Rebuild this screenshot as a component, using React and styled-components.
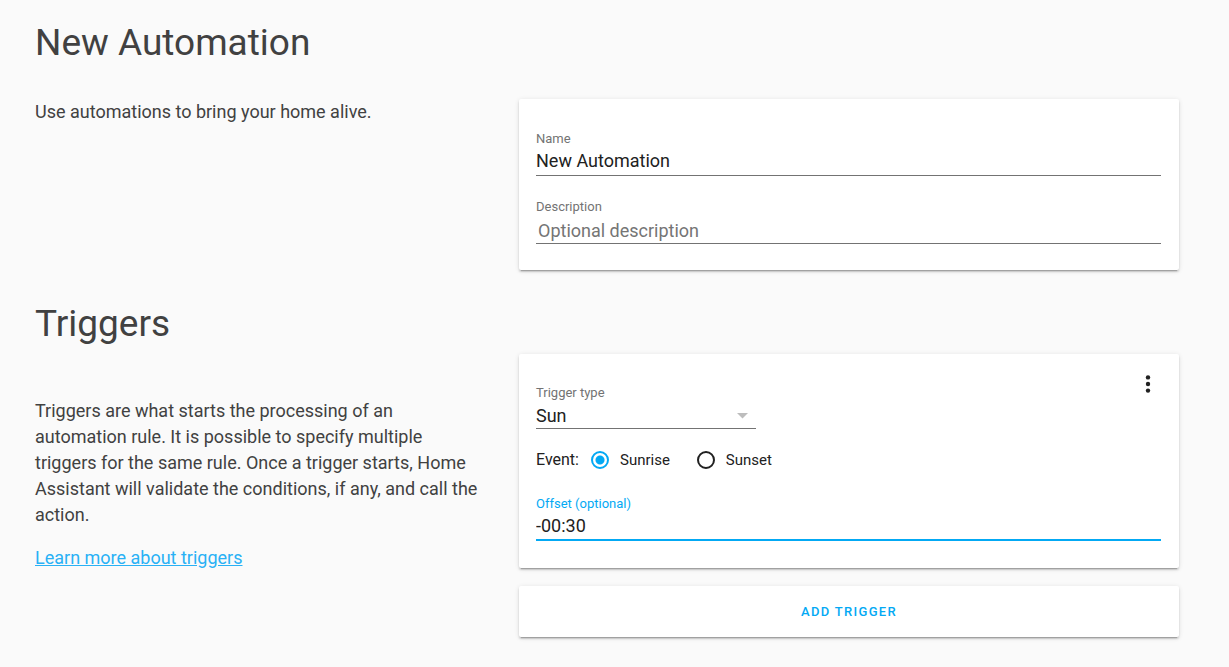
import React, { useState } from "react";
import styled, { createGlobalStyle } from "styled-components";

const GlobalStyle = createGlobalStyle`
  *, *::before, *::after { box-sizing: border-box; }
  body {
    margin: 0;
    background: #fafafa;
    color: #212121;
    font-family: Roboto, "Liberation Sans", sans-serif;
    font-size: 18px;
    line-height: 26px;
  }
  input, select, button { font: inherit; color: inherit; }
`;

const Page = styled.main`
  padding: 19px 50px 30px 35px;
`;

const Section = styled.section`
  & + & { margin-top: 30px; }
`;

const Heading = styled.h1`
  margin: 0;
  font-size: 37px;
  line-height: 48px;
  font-weight: 400;
  color: #414141;
`;

const Columns = styled.div`
  display: grid;
  grid-template-columns: 223fr 330fr;
  column-gap: 38px;
  margin-top: ${(p) => (p.$tight ? 6 : 32)}px;
`;

const Intro = styled.div`
  padding-top: ${(p) => (p.$lowered ? 44 : 0)}px;
  color: #414141;
`;

const Paragraph = styled.p`
  margin: 0 0 17px;
`;

const Link = styled.a`
  color: #29b1f5;
`;

const Stack = styled.div`
  display: flex;
  flex-direction: column;
  gap: 18px;
`;

const Card = styled.div`
  padding: ${(p) => (p.$menu ? "8px 18px 27px 17px" : "30px 18px 26px 17px")};
  border-radius: 2px;
  background: #fff;
  box-shadow: 0 2px 2px 0 rgba(0, 0, 0, 0.14), 0 1px 5px 0 rgba(0, 0, 0, 0.12),
    0 3px 1px -2px rgba(0, 0, 0, 0.2);
`;

const Field = styled.div`
  display: flex;
  flex-direction: column;
  & + & { margin-top: 21px; }
`;

const Label = styled.label`
  font-size: 13px;
  line-height: 20px;
  color: ${(p) => (p.$active ? "#03a9f4" : "#737373")};
`;

const TextInput = styled.input`
  width: 100%;
  height: 27px;
  padding: ${(p) => (p.$native ? "1px 2px 0" : "0 0 3px")};
  border: 0;
  border-bottom: ${(p) => (p.$active ? "2px solid #03a9f4" : "1px solid #737373")};
  border-radius: 0;
  background: none;
  outline: none;
  &::placeholder { color: #757575; opacity: 1; }
`;

const CardHeader = styled.div`
  display: flex;
  justify-content: space-between;
  align-items: flex-start;
  margin-right: -9px;
`;

const SelectField = styled(Field)`
  width: 220px;
  padding-top: 21px;
`;

const SelectBox = styled.div`
  display: grid;
  align-items: center;
  border-bottom: 1px solid #737373;
  & > * { grid-area: 1 / 1; }
`;

const Select = styled.select`
  width: 100%;
  height: 25px;
  padding: 0 0 3px;
  border: 0;
  background: none;
  appearance: none;
  outline: none;
`;

const Arrow = styled.svg`
  justify-self: end;
  margin-right: 8px;
  pointer-events: none;
`;

const MenuButton = styled.button`
  display: grid;
  place-items: center;
  width: 44px;
  height: 44px;
  padding: 0;
  border: 0;
  background: none;
  cursor: pointer;
`;

const EventRow = styled.fieldset`
  display: flex;
  align-items: center;
  margin: 18px 0 21px;
  padding: 0;
  border: 0;
  font-size: 15px;
`;

const EventTitle = styled.span`
  margin-right: 12px;
  font-size: 16px;
`;

const RadioLabel = styled.label`
  display: flex;
  align-items: center;
  gap: 11px;
  margin-right: 27px;
`;

const Radio = styled.input`
  appearance: none;
  width: 18px;
  height: 18px;
  margin: 0;
  border: 2px solid #212121;
  border-radius: 50%;
  &:checked {
    border-color: #03a9f4;
    background: radial-gradient(circle, #03a9f4 4px, transparent 5px);
  }
`;

const AddButton = styled.button`
  width: 100%;
  height: 51px;
  padding: 0;
  border: 0;
  border-radius: 2px;
  background: #fff;
  box-shadow: 0 2px 2px 0 rgba(0, 0, 0, 0.14), 0 1px 5px 0 rgba(0, 0, 0, 0.12),
    0 3px 1px -2px rgba(0, 0, 0, 0.2);
  color: #03a9f4;
  font-size: 13px;
  font-weight: 500;
  letter-spacing: 0.1em;
  text-transform: uppercase;
  cursor: pointer;
`;

export default function App() {
  const [name, setName] = useState("New Automation");
  const [description, setDescription] = useState("");
  const [event, setEvent] = useState("sunrise");
  const [offset, setOffset] = useState("-00:30");

  return (
    <>
      <GlobalStyle />
      <Page>
        <Section>
          <Heading>New Automation</Heading>
          <Columns>
            <Intro>
              <Paragraph>Use automations to bring your home alive.</Paragraph>
            </Intro>
            <Card>
              <Field>
                <Label htmlFor="name">Name</Label>
                <TextInput id="name" value={name} onChange={(e) => setName(e.target.value)} />
              </Field>
              <Field>
                <Label htmlFor="description">Description</Label>
                <TextInput
                  id="description"
                  $native
                  placeholder="Optional description"
                  value={description}
                  onChange={(e) => setDescription(e.target.value)}
                />
              </Field>
            </Card>
          </Columns>
        </Section>

        <Section>
          <Heading as="h2">Triggers</Heading>
          <Columns $tight>
            <Intro $lowered>
              <Paragraph>
                Triggers are what starts the processing of an automation rule. It is possible to
                specify multiple triggers for the same rule. Once a trigger starts, Home Assistant
                will validate the conditions, if any, and call the action.
              </Paragraph>
              <Link href="#triggers">Learn more about triggers</Link>
            </Intro>
            <Stack>
              <Card $menu>
                <CardHeader>
                  <SelectField>
                    <Label htmlFor="type">Trigger type</Label>
                    <SelectBox>
                      <Select id="type" defaultValue="Sun">
                        <option>Sun</option>
                        <option>State</option>
                        <option>Time</option>
                      </Select>
                      <Arrow width="11" height="6" viewBox="0 0 11 6" aria-hidden="true">
                        <path d="M0 0h11L5.500 5.500z" fill="#bdbdbd" />
                      </Arrow>
                    </SelectBox>
                  </SelectField>
                  <MenuButton type="button" aria-label="Trigger options">
                    <svg width="26" height="26" viewBox="0 0 26 26" fill="#212121">
                      <circle cx="13" cy="6.400" r="2.200" />
                      <circle cx="13" cy="13" r="2.200" />
                      <circle cx="13" cy="19.600" r="2.200" />
                    </svg>
                  </MenuButton>
                </CardHeader>
                <EventRow aria-label="Event">
                  <EventTitle>Event:</EventTitle>
                  <RadioLabel>
                    <Radio
                      type="radio"
                      name="event"
                      checked={event === "sunrise"}
                      onChange={() => setEvent("sunrise")}
                    />
                    Sunrise
                  </RadioLabel>
                  <RadioLabel>
                    <Radio
                      type="radio"
                      name="event"
                      checked={event === "sunset"}
                      onChange={() => setEvent("sunset")}
                    />
                    Sunset
                  </RadioLabel>
                </EventRow>
                <Field>
                  <Label htmlFor="offset" $active>Offset (optional)</Label>
                  <TextInput
                    id="offset"
                    $active
                    value={offset}
                    onChange={(e) => setOffset(e.target.value)}
                  />
                </Field>
              </Card>
              <AddButton type="button">Add trigger</AddButton>
            </Stack>
          </Columns>
        </Section>
      </Page>
    </>
  );
}
